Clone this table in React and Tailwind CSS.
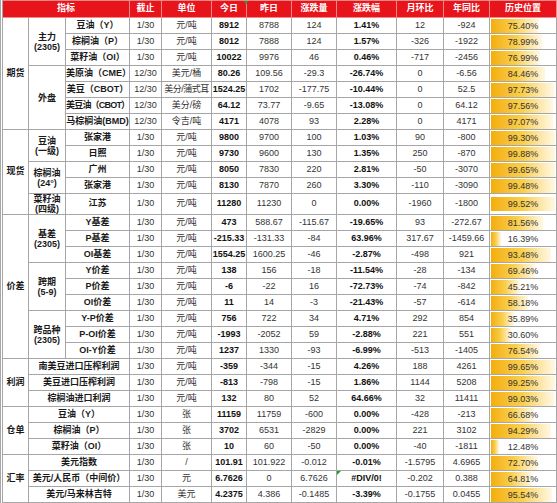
const rows = [
  { cat: ['期货', 7], grp: [['主力', '(2305)'], 3], name: '豆油（Y）', d: ['1/30', '元/吨', '8912', '8788', '124', '1.41%', '12', '-924', '75.40%'] },
  { name: '棕榈油（P）', d: ['1/30', '元/吨', '8012', '7888', '124', '1.57%', '-326', '-1922', '78.99%'] },
  { name: '菜籽油（OI）', d: ['1/30', '元/吨', '10022', '9976', '46', '0.46%', '-717', '-2456', '76.99%'] },
  { grp: [['外盘'], 4], name: '美原油（CME）', d: ['12/30', '美元/桶', '80.26', '109.56', '-29.3', '-26.74%', '0', '-6.56', '84.46%'] },
  { name: '美豆（CBOT）', d: ['12/30', '美分/蒲式耳', '1524.25', '1702', '-177.75', '-10.44%', '0', '52.5', '97.73%'] },
  { name: '美豆油（CBOT）', tight: true, d: ['12/30', '美分/磅', '64.12', '73.77', '-9.65', '-13.08%', '0', '64.12', '97.56%'] },
  { name: '马棕榈油(BMD)', d: ['12/30', '令吉/吨', '4171', '4078', '93', '2.28%', '0', '4171', '97.07%'] },
  { cat: ['现货', 5], grp: [['豆油', '(一级)'], 2], name: '张家港', d: ['1/30', '元/吨', '9800', '9700', '100', '1.03%', '90', '-800', '99.30%'] },
  { name: '日照', d: ['1/30', '元/吨', '9730', '9600', '130', '1.35%', '250', '-870', '99.88%'] },
  { grp: [['棕榈油', '(24°)'], 2], name: '广州', d: ['1/30', '元/吨', '8050', '7830', '220', '2.81%', '-50', '-3070', '99.65%'] },
  { name: '张家港', d: ['1/30', '元/吨', '8130', '7870', '260', '3.30%', '-110', '-3090', '99.48%'] },
  { grp: [['菜籽油', '(四级)'], 1], tall: true, name: '江苏', d: ['1/30', '元/吨', '11280', '11230', '0', '0.00%', '-1960', '-1800', '99.52%'] },
  { cat: ['价差', 9], grp: [['基差', '(2305)'], 3], name: 'Y基差', d: ['1/30', '元/吨', '473', '588.67', '-115.67', '-19.65%', '93', '-272.67', '81.56%'] },
  { name: 'P基差', d: ['1/30', '元/吨', '-215.33', '-131.33', '-84', '63.96%', '317.67', '-1459.66', '16.39%'] },
  { name: 'OI基差', d: ['1/30', '元/吨', '1554.25', '1600.25', '-46', '-2.87%', '-498', '921', '93.48%'] },
  { grp: [['跨期', '(5-9)'], 3], name: 'Y价差', d: ['1/30', '元/吨', '138', '156', '-18', '-11.54%', '-28', '-134', '69.46%'] },
  { name: 'P价差', d: ['1/30', '元/吨', '-6', '-22', '16', '-72.73%', '-74', '-842', '45.21%'] },
  { name: 'OI价差', d: ['1/30', '元/吨', '11', '14', '-3', '-21.43%', '-57', '-614', '58.18%'] },
  { grp: [['跨品种', '(2305)'], 3], name: 'Y-P价差', d: ['1/30', '元/吨', '756', '722', '34', '4.71%', '292', '854', '35.89%'] },
  { name: 'P-OI价差', d: ['1/30', '元/吨', '-1993', '-2052', '59', '-2.88%', '221', '551', '30.60%'] },
  { name: 'OI-Y价差', d: ['1/30', '元/吨', '1237', '1330', '-93', '-6.99%', '-513', '-1405', '76.54%'] },
  { cat: ['利润', 3], wide: true, name: '南美豆进口压榨利润', d: ['1/30', '元/吨', '-359', '-344', '-15', '4.26%', '188', '4261', '99.65%'] },
  { wide: true, name: '美豆进口压榨利润', d: ['1/30', '元/吨', '-813', '-798', '-15', '1.86%', '1144', '5208', '99.25%'] },
  { wide: true, name: '棕榈油进口利润', d: ['1/30', '元/吨', '132', '80', '52', '64.66%', '32', '11411', '99.03%'] },
  { cat: ['仓单', 3], wide: true, name: '豆油（Y）', d: ['1/30', '张', '11159', '11759', '-600', '0.00%', '-428', '-213', '66.68%'] },
  { wide: true, name: '棕榈油（P）', d: ['1/30', '张', '3702', '6531', '-2829', '0.00%', '221', '3102', '94.29%'] },
  { wide: true, name: '菜籽油（OI）', d: ['1/30', '张', '10', '60', '-50', '0.00%', '-40', '-1811', '12.48%'] },
  { cat: ['汇率', 3], wide: true, name: '美元指数', d: ['1/30', '/', '101.91', '101.922', '-0.012', '-0.01%', '-1.5795', '4.6965', '72.70%'] },
  { wide: true, name: '美元/人民币（中间价）', d: ['1/30', '元', '6.7626', '0', '6.7626', '#DIV/0!', '-0.202', '0.388', '64.81%'], err: true },
  { wide: true, name: '美元/马来林吉特', d: ['1/30', '美元', '4.2375', '4.386', '-0.1485', '-3.39%', '-0.1755', '0.0455', '95.54%'] },
]

const widths = [27, 37, 64, 32, 50, 35, 45, 45, 60, 47, 46, 67]
const heads = ['截止', '单位', '今日', '昨日', '涨跌量', '涨跌幅', '月环比', '年同比', '历史位置']

const cell = 'border border-[#a6a6a6] p-0 text-center align-middle whitespace-nowrap overflow-hidden'
const label = 'font-bold text-[#1a1a1a]'

function HistBar({ value }) {
  const pct = parseFloat(value)
  return (
    <div className="relative h-[14px] mx-[1px]">
      <div
        className="absolute left-0 top-0 bottom-0 bg-gradient-to-r from-[#f4ae00] via-[#f9cf4a] to-[#fff8e4]"
        style={{ width: `${pct}%` }}
      />
      <span className="relative leading-[14px] text-[#333]">{value}</span>
    </div>
  )
}

export default function App() {
  return (
    <div
      className="bg-white w-[557px] h-[503px] text-[9px]"
      style={{ fontFamily: '"Liberation Sans", "Noto Sans CJK SC", sans-serif' }}
    >
      <table className="table-fixed border-collapse w-[555px] border-l-[3px] border-double border-l-[#a6a6a6]">
        <colgroup>
          {widths.map((w, i) => (
            <col key={i} style={{ width: w }} />
          ))}
        </colgroup>
        <thead>
          <tr className="h-[17px] bg-[#e8141c] text-white font-bold">
            <th colSpan={3} className="border border-[#f08a8a] p-0 font-bold">指标</th>
            {heads.map((h, i) => (
              <th key={h} className="relative border border-[#f08a8a] p-0 font-bold">
                {h}
                {i === 2 && (
                  <span className="absolute right-[-2px] top-0 w-0 h-0 border-l-[2px] border-r-[2px] border-t-[4px] border-l-transparent border-r-transparent border-t-[#1f9e3a]" />
                )}
              </th>
            ))}
          </tr>
        </thead>
        <tbody>
          {rows.map((r, i) => (
            <tr key={i} className={r.tall ? 'h-[19px]' : 'h-[16px]'}>
              {r.cat && (
                <td rowSpan={r.cat[1]} className={`${cell} ${label}`}>
                  {r.cat[0]}
                </td>
              )}
              {r.grp && (
                <td rowSpan={r.grp[1]} className={`${cell} ${label} leading-[10px]`}>
                  {r.grp[0].map((t) => (
                    <div key={t}>{t}</div>
                  ))}
                </td>
              )}
              <td colSpan={r.wide ? 2 : 1} className={`${cell} ${label} ${r.tight ? 'tracking-[-0.8px]' : ''}`}>
                {r.name}
              </td>
              <td className={`${cell} text-[#333]`}>{r.d[0]}</td>
              <td className={`${cell} text-[#333] ${r.d[1].length > 4 ? 'tracking-[-0.5px]' : ''}`}>{r.d[1]}</td>
              <td className={`${cell} font-bold text-[#111]`}>{r.d[2]}</td>
              <td className={`${cell} text-[#333]`}>{r.d[3]}</td>
              <td className={`${cell} text-[#333]`}>{r.d[4]}</td>
              <td className={`${cell} relative font-bold text-[#111]`}>
                {r.err && (
                  <span className="absolute left-0 top-0 w-0 h-0 border-t-[4px] border-r-[4px] border-t-[#1f9e3a] border-r-transparent" />
                )}
                {r.d[5]}
              </td>
              <td className={`${cell} text-[#333]`}>{r.d[6]}</td>
              <td className={`${cell} text-[#333]`}>{r.d[7]}</td>
              <td className={cell}>
                <HistBar value={r.d[8]} />
              </td>
            </tr>
          ))}
        </tbody>
      </table>
    </div>
  )
}
